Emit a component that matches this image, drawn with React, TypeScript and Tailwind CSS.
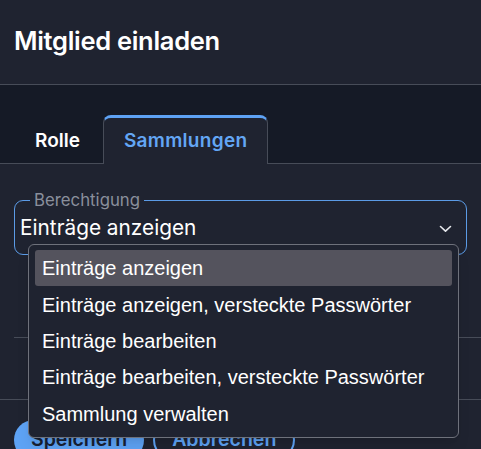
import React from "react";

const options = [
    "Einträge anzeigen",
    "Einträge anzeigen, versteckte Passwörter",
    "Einträge bearbeiten",
    "Einträge bearbeiten, versteckte Passwörter",
    "Sammlung verwalten",
];

const App = () => {
    return (
        <div className="relative w-[481px] h-[449px] overflow-hidden bg-[#1f2330] text-white font-['Inter',sans-serif]">
            {/* header */}
            <div className="h-[85px] flex items-center px-[14px] border-b border-[#474c58]">
                <h1 className="text-[25.5px] font-semibold tracking-[-0.3px] pb-[2px]">Mitglied einladen</h1>
            </div>

            {/* tabs */}
            <div className="bg-[#151a26] pt-[30px] flex items-end">
                <div className="w-[14px] h-[49px] border-b border-[#474c58]"></div>
                <div className="h-[49px] px-[21px] pt-[4px] flex items-center border-b border-[#474c58] text-[19px] font-semibold">
                    Rolle
                </div>
                <div className="w-[2px] h-[49px] border-b border-[#474c58]"></div>
                <div className="h-[49px] px-[20px] pt-[1px] flex items-center bg-[#1f2330] border-x border-[#474c58] border-t-[3px] border-t-[#5ea2f4] rounded-t-[8px] text-[19px] font-semibold tracking-[0.3px] text-[#63a6f4]">
                    Sammlungen
                </div>
                <div className="flex-1 h-[49px] border-b border-[#474c58]"></div>
            </div>

            {/* content */}
            <div className="px-[14px] pt-[26px]">
                <fieldset className="border border-[#5b9be6] rounded-[9px] px-[5px] h-[65px]">
                    <legend className="ml-[10px] px-[4px] text-[16.8px] leading-[20px] text-[#8a8f9c]">Berechtigung</legend>
                    <div className="flex items-center justify-between pr-[9px] mt-[5px]">
                        <span className="text-[20.8px] leading-[26px]">Einträge anzeigen</span>
                        <svg width="13" height="8" viewBox="0 0 13 8" fill="none" className="mt-[1px]">
                            <path d="M1.5 1.5 L6.5 6.2 L11.5 1.5" stroke="#e5e7eb" strokeWidth="1.6" strokeLinecap="round" strokeLinejoin="round" />
                        </svg>
                    </div>
                </fieldset>
            </div>

            <div className="ml-[14px] mt-[82px] border-t border-[#474c58]"></div>
            <div className="mt-[61px] border-t border-[#474c58]"></div>

            <div className="px-[14px] pt-[20px] flex gap-[9px]">
                <button className="h-[40px] px-[17px] rounded-full bg-[#5ea3f5] text-[#172033] text-[19.5px] font-semibold">Speichern</button>
                <button className="h-[40px] px-[17px] rounded-full border-2 border-[#5ea3f5] text-[#5ea3f5] text-[19.5px] font-semibold">Abbrechen</button>
            </div>

            {/* open select list */}
            <div className="absolute left-[28px] top-[244px] w-[431px] rounded-[6px] border border-[#6e717b] bg-[#1f2330] px-[6px] py-[5px] font-['Liberation_Sans',Arial,sans-serif] shadow-lg">
                {options.map((o, i) => (
                    <div
                        key={o}
                        className={`h-[36.4px] flex items-center px-[7px] text-[20px] rounded-[3px] ${i === 0 ? "bg-[#54535d]" : ""}`}
                    >
                        {o}
                    </div>
                ))}
            </div>
        </div>
    );
};

export default App;
